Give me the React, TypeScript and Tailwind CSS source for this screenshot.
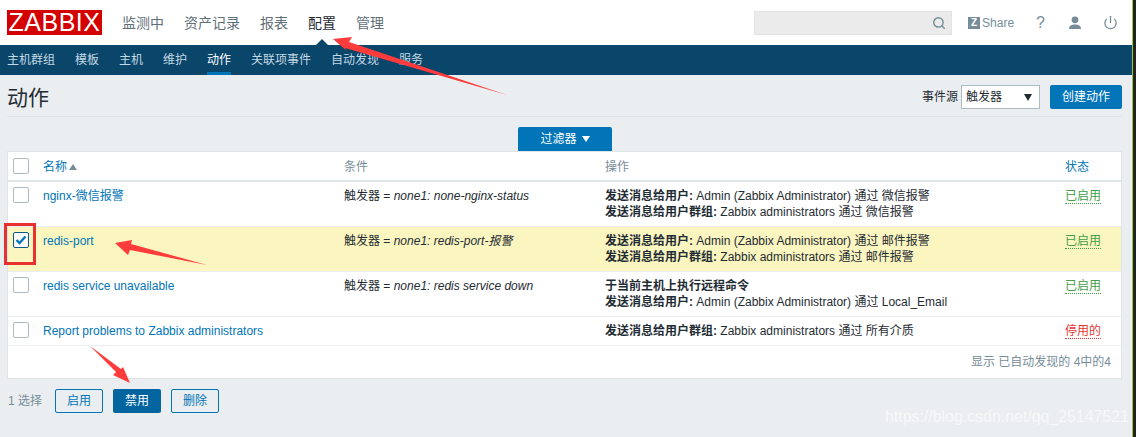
import React from 'react';
import { Search, Power } from 'lucide-react';

const topMenu = ['监测中', '资产记录', '报表', '配置', '管理'];
const subMenu = ['主机群组', '模板', '主机', '维护', '动作', '关联项事件', '自动发现', '服务'];

interface Action {
  name: string;
  condition?: React.ReactNode;
  ops: [string, string][];
  enabled: boolean;
  checked?: boolean;
}

const actions: Action[] = [
  {
    name: 'nginx-微信报警',
    condition: 'none1: none-nginx-status',
    ops: [
      ['发送消息给用户:', 'Admin (Zabbix Administrator) 通过 微信报警'],
      ['发送消息给用户群组:', 'Zabbix administrators 通过 微信报警'],
    ],
    enabled: true,
  },
  {
    name: 'redis-port',
    condition: 'none1: redis-port-报警',
    ops: [
      ['发送消息给用户:', 'Admin (Zabbix Administrator) 通过 邮件报警'],
      ['发送消息给用户群组:', 'Zabbix administrators 通过 邮件报警'],
    ],
    enabled: true,
    checked: true,
  },
  {
    name: 'redis service unavailable',
    condition: 'none1: redis service down',
    ops: [
      ['于当前主机上执行远程命令', ''],
      ['发送消息给用户:', 'Admin (Zabbix Administrator) 通过 Local_Email'],
    ],
    enabled: true,
  },
  {
    name: 'Report problems to Zabbix administrators',
    ops: [['发送消息给用户群组:', 'Zabbix administrators 通过 所有介质']],
    enabled: false,
  },
];

function Checkbox({ checked }: { checked?: boolean }) {
  return (
    <span
      className={`flex w-4 h-4 items-center justify-center rounded-[2px] border bg-white ${
        checked ? 'border-[#0a5a8c]' : 'border-[#acbbc2]'
      }`}
    >
      {checked && (
        <svg width="12" height="10" viewBox="0 0 12 10">
          <path d="M1.5 5l3 3 6-6.5" fill="none" stroke="#0275b8" strokeWidth="2.4" />
        </svg>
      )}
    </span>
  );
}

function Header() {
  return (
    <>
      <header className="relative flex h-[45px] items-center bg-white pl-[7px] pr-[14px]">
        <div className="flex h-[25px] w-[95px] items-center justify-center bg-[#d40000] text-[25px] leading-none tracking-[0.5px] text-white">
          ZABBIX
        </div>
        <nav className="ml-[10px] flex text-[14px]">
          {topMenu.map((item) => (
            <a
              key={item}
              className={`px-[10px] ${item === '配置' ? 'text-[#1f2c33]' : 'text-[#5f6f78]'}`}
            >
              {item}
            </a>
          ))}
        </nav>
        <div className="ml-auto flex h-[24px] w-[198px] items-center justify-end border border-[#e4e4e4] bg-[#ebebeb] pr-[5px]">
          <Search className="h-[14px] w-[14px] text-[#768d99]" strokeWidth={2.5} />
        </div>
        <div className="ml-[16px] flex items-center text-[12px] text-[#768d99]">
          <span className="flex h-[12px] w-[12px] items-center justify-center bg-[#768d99] text-[10px] font-bold text-white">
            Z
          </span>
          <span className="ml-[2px]">Share</span>
        </div>
        <span className="ml-[22px] text-[16px] text-[#768d99]">?</span>
        <svg className="ml-[23px]" width="14" height="14" viewBox="0 0 14 14">
          <circle cx="7" cy="3.8" r="3.4" fill="#768d99" />
          <path d="M1 13c0-3.2 2.6-4.4 6-4.4s6 1.2 6 4.4z" fill="#768d99" />
        </svg>
        <Power className="ml-[21px] h-[15px] w-[15px] text-[#768d99]" strokeWidth={2} />
        <span className="absolute bottom-0 left-[316px] h-0 w-0 border-x-[6px] border-b-[6px] border-x-transparent border-b-[#0a466a]" />
      </header>
      <nav className="flex h-[30px] gap-[20px] bg-[#0a466a] pl-[7px] text-[12px]">
        {subMenu.map((item) => (
          <a
            key={item}
            className={`flex items-center border-b-[3px] pt-[3px] ${
              item === '动作' ? 'border-[#0275b8] text-white' : 'border-transparent text-[#c3d8e4]'
            }`}
          >
            {item}
          </a>
        ))}
      </nav>
    </>
  );
}

function ActionsTable() {
  return (
    <div className="border border-[#dfe4e7] bg-white">
      <table className="w-full table-fixed border-separate border-spacing-0">
        <colgroup>
          <col className="w-[30px]" />
          <col className="w-[301px]" />
          <col className="w-[261px]" />
          <col />
          <col className="w-[61px]" />
        </colgroup>
        <thead>
          <tr className="h-[30px] text-left">
            <th className="border-b-2 border-[#dfe4e7] pl-[5px] align-middle font-normal">
              <Checkbox />
            </th>
            <th className="border-b-2 border-[#dfe4e7] pl-[5px] pt-[2px] font-normal text-[#0275b8]">
              <span className="flex items-center gap-[2px]">
                名称
                <span className="h-0 w-0 border-x-[4px] border-b-[6px] border-x-transparent border-b-[#768d99]" />
              </span>
            </th>
            <th className="border-b-2 border-[#dfe4e7] pl-[5px] pt-[2px] font-normal text-[#768d99]">条件</th>
            <th className="border-b-2 border-[#dfe4e7] pl-[5px] pt-[2px] font-normal text-[#768d99]">操作</th>
            <th className="border-b-2 border-[#dfe4e7] pl-[5px] pt-[2px] font-normal text-[#0275b8]">状态</th>
          </tr>
        </thead>
        <tbody>
          {actions.map((a) => (
            <tr key={a.name} className={a.checked ? 'bg-[#fbf5c0]' : ''}>
              <td className={`border-b border-[#ebeef0] pl-[5px] align-top pt-[5px] ${a.ops.length > 1 ? 'h-[45px]' : 'h-[29px]'}`}>
                <Checkbox checked={a.checked} />
              </td>
              <td className="border-b border-[#ebeef0] pl-[5px] align-top pt-[6px] text-[#0275b8]">{a.name}</td>
              <td className="border-b border-[#ebeef0] pl-[5px] align-top pt-[6px] text-[#1f2c33]">
                {a.condition && (
                  <>
                    触发器 = <i>{a.condition}</i>
                  </>
                )}
              </td>
              <td className="border-b border-[#ebeef0] pl-[5px] align-top pt-[6px] text-[#1f2c33]">
                {a.ops.map(([label, text]) => (
                  <div key={label}>
                    <b>{label}</b> {text}
                  </div>
                ))}
              </td>
              <td className="border-b border-[#ebeef0] pl-[5px] align-top pt-[6px]">
                <span
                  className={`border-b border-dotted ${
                    a.enabled ? 'border-[#429e47] text-[#429e47]' : 'border-[#e33734] text-[#e33734]'
                  }`}
                >
                  {a.enabled ? '已启用' : '停用的'}
                </span>
              </td>
            </tr>
          ))}
        </tbody>
      </table>
      <div className="flex h-[32px] items-start justify-end pr-[10px] pt-[8px] text-[#768d99]">
        显示 已自动发现的 4中的4
      </div>
    </div>
  );
}

function Arrows() {
  return (
    <svg className="pointer-events-none absolute left-0 top-0" width="1136" height="437" viewBox="0 0 1136 437">
      <g fill="#ff3b3b">
        <path d="M333 39L352 37 349 42 507 95 345 48 347 51z" />
        <path d="M115 243L132 240 131 244 207 265 130 250 128 255z" />
        <path d="M90 346L121 369 123 367 130 383 113 375 116 372z" />
      </g>
      <rect x="5.5" y="224.5" width="29" height="39" fill="none" stroke="#e83232" strokeWidth="3" />
    </svg>
  );
}

export default function App() {
  return (
    <div
      className="relative flex h-[437px] w-[1136px] overflow-hidden text-[12px] leading-[16px]"
      style={{ fontFamily: '"Liberation Sans", "Noto Sans CJK SC", sans-serif' }}
    >
      <div className="w-[1132px] bg-[#ebeef0]">
        <Header />
        <main className="pl-[7px] pr-[10px]">
          <div className="flex h-[42px] items-end justify-between border-b border-[#dfe4e7] pb-[7px]">
            <h1 className="mb-[-2px] text-[21px] leading-[26px] text-[#1f2c33]">动作</h1>
            <div className="flex items-center">
              <span className="mr-[3px] text-[#1f2c33]">事件源</span>
              <div className="flex h-[24px] w-[79px] items-center justify-between border border-[#acbbc2] bg-white pl-[4px] pr-[7px] text-[#1f2c33]">
                触发器
                <span className="h-0 w-0 border-x-[4px] border-t-[7px] border-x-transparent border-t-[#1f2c33]" />
              </div>
              <button className="ml-[10px] h-[24px] w-[72px] rounded-[2px] bg-[#0275b8] text-white">创建动作</button>
            </div>
          </div>
          <div className="mt-[10px] flex justify-center pl-[1px]">
            <div className="flex h-[24px] w-[94px] items-center justify-center gap-[5px] rounded-t-[2px] bg-[#0275b8] text-white">
              过滤器
              <span className="h-0 w-0 border-x-[4px] border-t-[6px] border-x-transparent border-t-white" />
            </div>
          </div>
          <ActionsTable />
          <div className="mt-[10px] flex h-[24px] items-center text-[#768d99]">
            <span className="w-[48px] pl-[1px]">1 选择</span>
            <button className="h-[24px] w-[48px] rounded-[2px] border border-[#0275b8] text-[#0275b8]">启用</button>
            <button className="ml-[10px] h-[24px] w-[48px] rounded-[2px] bg-[#02659f] text-white">禁用</button>
            <button className="ml-[10px] h-[24px] w-[48px] rounded-[2px] border border-[#0275b8] text-[#0275b8]">删除</button>
          </div>
        </main>
      </div>
      <div className="w-px bg-[#9acd32]" />
      <div className="flex-1 bg-[#222222]" />
      <Arrows />
      <span className="absolute left-[885px] top-[407px] whitespace-nowrap text-[15.9px] leading-[20px] text-white opacity-60">
        https://blog.csdn.net/qq_25147521
      </span>
    </div>
  );
}
